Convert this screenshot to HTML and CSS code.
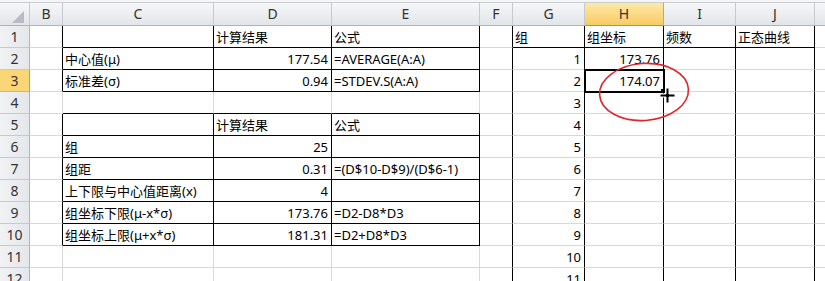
FILE: index.html
```
<!DOCTYPE html>
<html lang="zh-CN">
<head>
    <meta charset="UTF-8">
    <title>组坐标</title>
    <link rel="stylesheet" href="styles.css">
</head>
<body>
    <div class="sheet">
        <div class="topbar"></div>
        <table class="grid">
            <tr class="heads">
                <th class="corner w-rh"><svg width="29" height="22" viewBox="0 0 29 22"><polygon points="24,8 24,20 12,20" fill="#b8bcc2"/></svg></th>
                <th class="w-b">B</th>
                <th class="w-c">C</th>
                <th class="w-d">D</th>
                <th class="w-e">E</th>
                <th class="w-f">F</th>
                <th class="w-g">G</th>
                <th class="w-h sel">H</th>
                <th class="w-i">I</th>
                <th class="w-j">J</th>
                <th class="w-k"></th>
            </tr>
            <tr>
                <th class="rh">1</th>
                <td class="vr"></td>
                <td class="vr hb"></td>
                <td class="vr hb">计算结果</td>
                <td class="vr hb">公式</td>
                <td class="vr"></td>
                <td class="vr hb">组</td>
                <td class="vr hb">组坐标</td>
                <td class="vr hb">频数</td>
                <td class="vr hb">正态曲线</td>
                <td></td>
            </tr>
            <tr>
                <th class="rh">2</th>
                <td class="vr"></td>
                <td class="vr hb">中心值(μ)</td>
                <td class="vr hb num">177.54</td>
                <td class="vr hb">=AVERAGE(A:A)</td>
                <td class="vr"></td>
                <td class="vr num">1</td>
                <td class="vr num">173.76</td>
                <td class="vr"></td>
                <td class="vr"></td>
                <td></td>
            </tr>
            <tr>
                <th class="rh sel">3</th>
                <td class="vr"></td>
                <td class="vr hb">标准差(σ)</td>
                <td class="vr hb num">0.94</td>
                <td class="vr hb">=STDEV.S(A:A)</td>
                <td class="vr"></td>
                <td class="vr num">2</td>
                <td class="vr num active">174.07<span class="handle"></span></td>
                <td class="vr"></td>
                <td class="vr"></td>
                <td></td>
            </tr>
            <tr>
                <th class="rh">4</th>
                <td></td>
                <td class="hb"></td>
                <td class="hb"></td>
                <td class="hb"></td>
                <td class="vr"></td>
                <td class="vr num">3</td>
                <td class="vr"></td>
                <td class="vr"></td>
                <td class="vr"></td>
                <td></td>
            </tr>
            <tr>
                <th class="rh">5</th>
                <td class="vr"></td>
                <td class="vr hb"></td>
                <td class="vr hb">计算结果</td>
                <td class="vr hb">公式</td>
                <td class="vr"></td>
                <td class="vr num">4</td>
                <td class="vr"></td>
                <td class="vr"></td>
                <td class="vr"></td>
                <td></td>
            </tr>
            <tr>
                <th class="rh">6</th>
                <td class="vr"></td>
                <td class="vr hb">组</td>
                <td class="vr hb num">25</td>
                <td class="vr hb"></td>
                <td class="vr"></td>
                <td class="vr num">5</td>
                <td class="vr"></td>
                <td class="vr"></td>
                <td class="vr"></td>
                <td></td>
            </tr>
            <tr>
                <th class="rh">7</th>
                <td class="vr"></td>
                <td class="vr hb">组距</td>
                <td class="vr hb num">0.31</td>
                <td class="vr hb">=(D$10-D$9)/(D$6-1)</td>
                <td class="vr"></td>
                <td class="vr num">6</td>
                <td class="vr"></td>
                <td class="vr"></td>
                <td class="vr"></td>
                <td></td>
            </tr>
            <tr>
                <th class="rh">8</th>
                <td class="vr"></td>
                <td class="vr hb">上下限与中心值距离(x)</td>
                <td class="vr hb num">4</td>
                <td class="vr hb"></td>
                <td class="vr"></td>
                <td class="vr num">7</td>
                <td class="vr"></td>
                <td class="vr"></td>
                <td class="vr"></td>
                <td></td>
            </tr>
            <tr>
                <th class="rh">9</th>
                <td class="vr"></td>
                <td class="vr hb">组坐标下限(μ-x*σ)</td>
                <td class="vr hb num">173.76</td>
                <td class="vr hb">=D2-D8*D3</td>
                <td class="vr"></td>
                <td class="vr num">8</td>
                <td class="vr"></td>
                <td class="vr"></td>
                <td class="vr"></td>
                <td></td>
            </tr>
            <tr>
                <th class="rh">10</th>
                <td class="vr"></td>
                <td class="vr hb">组坐标上限(μ+x*σ)</td>
                <td class="vr hb num">181.31</td>
                <td class="vr hb">=D2+D8*D3</td>
                <td class="vr"></td>
                <td class="vr num">9</td>
                <td class="vr"></td>
                <td class="vr"></td>
                <td class="vr"></td>
                <td></td>
            </tr>
            <tr>
                <th class="rh">11</th>
                <td></td>
                <td></td>
                <td></td>
                <td></td>
                <td class="vr"></td>
                <td class="vr num">10</td>
                <td class="vr"></td>
                <td class="vr"></td>
                <td class="vr"></td>
                <td></td>
            </tr>
            <tr>
                <th class="rh">12</th>
                <td></td>
                <td></td>
                <td></td>
                <td></td>
                <td class="vr"></td>
                <td class="vr num">11</td>
                <td class="vr"></td>
                <td class="vr"></td>
                <td class="vr"></td>
                <td></td>
            </tr>
        </table>

        <!-- red hand-drawn mark around H3 -->
        <svg class="mark" width="100" height="66" viewBox="0 0 100 66">
            <ellipse cx="50" cy="33" rx="44.5" ry="28.5" fill="none" stroke="#e0262a" stroke-width="1.6" transform="rotate(-4 50 33)"/>
        </svg>

        <!-- fill-handle cursor -->
        <svg class="cursor" width="17" height="17" viewBox="0 0 17 17">
            <path d="M7 1h3v6h6v3h-6v6h-3v-6h-6v-3h6z" fill="#000" stroke="#fff" stroke-width="1"/>
        </svg>
    </div>
</body>
</html>
```

FILE: styles.css
```
body {
    margin: 0;
    background: #fff;
    overflow: hidden;
}
.sheet {
    position: relative;
    width: 825px;
    height: 281px;
    overflow: hidden;
    font-family: "Noto Sans", "Noto Sans CJK SC", sans-serif;
    font-size: 13px;
    color: #000;
}
.topbar {
    height: 2px;
    background: #f4f5f7;
}
.grid {
    border-collapse: separate;
    border-spacing: 0;
    table-layout: fixed;
    width: 835px;
}
.grid th,
.grid td {
    box-sizing: border-box;
    height: 22px;
    padding: 0 2px;
    line-height: 20px;
    white-space: nowrap;
    overflow: hidden;
    text-align: left;
    vertical-align: middle;
    border-right: 1px solid #d9d9d9;
    border-bottom: 1px solid #d9d9d9;
}
.grid .heads th {
    height: 23px;
    border-top: 1px solid #c9cdd2;
    border-right: 1px solid #c6cad0;
    border-bottom: 1px solid #aeb4bb;
    background: linear-gradient(#f6f7f8, #e2e5e9);
    color: #333;
    font-weight: normal;
    text-align: center;
    font-size: 14px;
}
.grid .heads th.sel {
    background: linear-gradient(#fde9a9, #f8cb62);
    border-right-color: #dba44c;
    border-bottom-color: #c98d2b;
}
.grid .heads th.corner {
    padding: 0;
    line-height: 0;
}
.w-rh { width: 30px; }
.w-b { width: 33px; }
.w-c { width: 151px; }
.w-d { width: 118px; }
.w-e { width: 148px; }
.w-f { width: 33px; }
.w-g { width: 72px; }
.w-h { width: 79px; }
.w-i { width: 72px; }
.w-j { width: 79px; }
.w-k { width: 20px; }

.grid th.rh {
    background: linear-gradient(90deg, #f1f2f4, #e4e7eb);
    border-right: 1px solid #aeb4bb;
    border-bottom: 1px solid #c6cad0;
    color: #333;
    font-weight: normal;
    text-align: center;
    font-size: 14px;
}
.grid th.rh.sel {
    background: #fbd677;
    border-right-color: #d8983a;
    border-bottom-color: #e0b15c;
}
.grid td.vr {
    border-right-color: #000;
}
.grid td.hb {
    border-bottom-color: #000;
}
.grid td.num {
    text-align: right;
    padding-right: 3px;
}
.grid td.active {
    position: relative;
    outline: 2px solid #000;
    outline-offset: -1px;
}
.handle {
    position: absolute;
    right: -4px;
    bottom: -4px;
    width: 5px;
    height: 5px;
    background: #000;
    border: 1px solid #fff;
    z-index: 2;
}
.mark {
    position: absolute;
    left: 594px;
    top: 59px;
}
.cursor {
    position: absolute;
    left: 659px;
    top: 87px;
}
```
